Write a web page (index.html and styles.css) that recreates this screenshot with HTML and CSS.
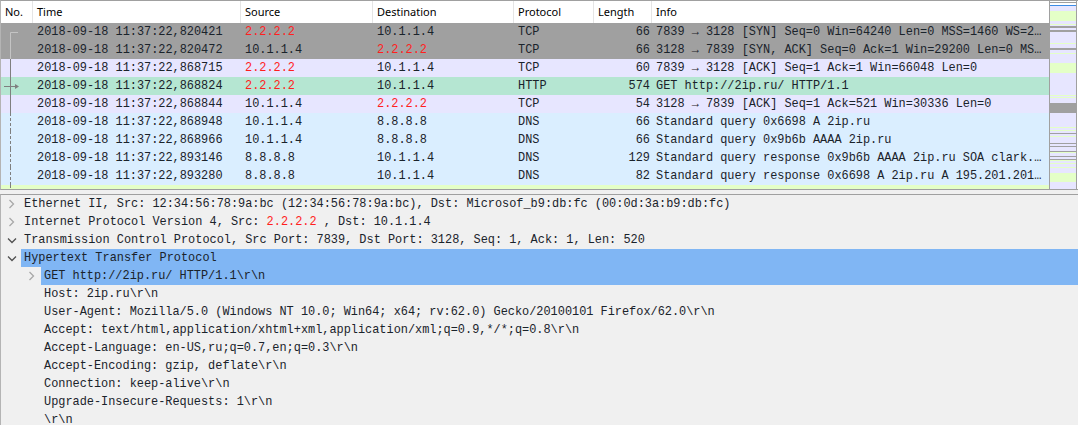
FILE: index.html
```html
<!DOCTYPE html>
<html>
<head>
<meta charset="utf-8">
<link rel="stylesheet" href="styles.css">
</head>
<body>
<div class="app">
  <div class="plist">
    <div class="table">
      <div class="hdr cols">
        <div class="hc">No.</div>
        <div class="hc">Time</div>
        <div class="hc">Source</div>
        <div class="hc">Destination</div>
        <div class="hc">Protocol</div>
        <div class="hc">Length</div>
        <div class="hc last">Info</div>
      </div>

      <div class="row cols c-gray">
        <div class="no"><svg width="32" height="18"><path class="ln" d="M9.5 9.5H17M9.5 9.5V18"/></svg></div>
        <div class="c">2018-09-18 11:37:22,820421</div>
        <div class="c red">2.2.2.2</div>
        <div class="c">10.1.1.4</div>
        <div class="c">TCP</div>
        <div class="c num">66</div>
        <div class="c info">7839 → 3128 [SYN] Seq=0 Win=64240 Len=0 MSS=1460 WS=256 SACK_PERM=1</div>
      </div>
      <div class="row cols c-gray">
        <div class="no"><svg width="32" height="18"><path class="ln" d="M9.5 0V18"/></svg></div>
        <div class="c">2018-09-18 11:37:22,820472</div>
        <div class="c">10.1.1.4</div>
        <div class="c red">2.2.2.2</div>
        <div class="c">TCP</div>
        <div class="c num">66</div>
        <div class="c info">3128 → 7839 [SYN, ACK] Seq=0 Ack=1 Win=29200 Len=0 MSS=1460 SACK_PERM=1 WS=128</div>
      </div>
      <div class="row cols c-lav">
        <div class="no"><svg width="32" height="18"><path class="ln" d="M9.5 0V18"/></svg></div>
        <div class="c">2018-09-18 11:37:22,868715</div>
        <div class="c red">2.2.2.2</div>
        <div class="c">10.1.1.4</div>
        <div class="c">TCP</div>
        <div class="c num">60</div>
        <div class="c info">7839 → 3128 [ACK] Seq=1 Ack=1 Win=66048 Len=0</div>
      </div>
      <div class="row cols c-sel">
        <div class="no"><svg width="32" height="18"><path class="ln" d="M9.5 0V18M3 9.5H15"/><polygon class="ah" points="14,7 18,9.5 14,12"/></svg></div>
        <div class="c">2018-09-18 11:37:22,868824</div>
        <div class="c red">2.2.2.2</div>
        <div class="c">10.1.1.4</div>
        <div class="c">HTTP</div>
        <div class="c num">574</div>
        <div class="c info">GET http://2ip.ru/ HTTP/1.1</div>
      </div>
      <div class="row cols c-lav">
        <div class="no"><svg width="32" height="18"><path class="ln" d="M9.5 0V18"/></svg></div>
        <div class="c">2018-09-18 11:37:22,868844</div>
        <div class="c">10.1.1.4</div>
        <div class="c red">2.2.2.2</div>
        <div class="c">TCP</div>
        <div class="c num">54</div>
        <div class="c info">3128 → 7839 [ACK] Seq=1 Ack=521 Win=30336 Len=0</div>
      </div>
      <div class="row cols c-blue">
        <div class="no"><svg width="32" height="18"><path class="ln dash" d="M9.5 0V18"/></svg></div>
        <div class="c">2018-09-18 11:37:22,868948</div>
        <div class="c">10.1.1.4</div>
        <div class="c">8.8.8.8</div>
        <div class="c">DNS</div>
        <div class="c num">66</div>
        <div class="c info">Standard query 0x6698 A 2ip.ru</div>
      </div>
      <div class="row cols c-blue">
        <div class="no"><svg width="32" height="18"><path class="ln dash" d="M9.5 0V18"/></svg></div>
        <div class="c">2018-09-18 11:37:22,868966</div>
        <div class="c">10.1.1.4</div>
        <div class="c">8.8.8.8</div>
        <div class="c">DNS</div>
        <div class="c num">66</div>
        <div class="c info">Standard query 0x9b6b AAAA 2ip.ru</div>
      </div>
      <div class="row cols c-blue">
        <div class="no"><svg width="32" height="18"><path class="ln dash" d="M9.5 0V18"/></svg></div>
        <div class="c">2018-09-18 11:37:22,893146</div>
        <div class="c">8.8.8.8</div>
        <div class="c">10.1.1.4</div>
        <div class="c">DNS</div>
        <div class="c num">129</div>
        <div class="c info">Standard query response 0x9b6b AAAA 2ip.ru SOA clark.ns.cloudflare.com</div>
      </div>
      <div class="row cols c-blue">
        <div class="no"><svg width="32" height="18"><path class="ln dash" d="M9.5 0V18"/></svg></div>
        <div class="c">2018-09-18 11:37:22,893280</div>
        <div class="c">8.8.8.8</div>
        <div class="c">10.1.1.4</div>
        <div class="c">DNS</div>
        <div class="c num">82</div>
        <div class="c info">Standard query response 0x6698 A 2ip.ru A 195.201.201.32</div>
      </div>
      <div class="row partial cols c-ygrn">
        <div class="no"><svg width="32" height="4"><path class="ln dash" d="M9.5 0V4"/></svg></div>
      </div>
    </div>
    <div class="minimap"></div>
  </div>

  <div class="splitter"></div>

  <div class="details">
    <div class="node">
      <span class="tw"><svg width="21" height="18"><polyline class="chev-c" points="8.5,5 12.5,9 8.5,13"/></svg></span>
      <span class="tx">Ethernet II, Src: 12:34:56:78:9a:bc (12:34:56:78:9a:bc), Dst: Microsof_b9:db:fc (00:0d:3a:b9:db:fc)</span>
    </div>
    <div class="node">
      <span class="tw"><svg width="21" height="18"><polyline class="chev-c" points="8.5,5 12.5,9 8.5,13"/></svg></span>
      <span class="tx">Internet Protocol Version 4, Src: <span class="red">2.2.2.2</span> , Dst: 10.1.1.4</span>
    </div>
    <div class="node">
      <span class="tw"><svg width="21" height="18"><polyline class="chev-e" points="7,7.5 11,11.5 15,7.5"/></svg></span>
      <span class="tx">Transmission Control Protocol, Src Port: 7839, Dst Port: 3128, Seq: 1, Ack: 1, Len: 520</span>
    </div>
    <div class="node">
      <span class="tw"><svg width="21" height="18"><polyline class="chev-e" points="7,7.5 11,11.5 15,7.5"/></svg></span>
      <span class="tx sel">Hypertext Transfer Protocol</span>
    </div>
    <div class="node lvl1">
      <span class="tw"><svg width="21" height="18"><polyline class="chev-c" points="8.5,5 12.5,9 8.5,13"/></svg></span>
      <span class="tx sel">GET http://2ip.ru/ HTTP/1.1\r\n</span>
    </div>
    <div class="node lvl1"><span class="tw"></span><span class="tx">Host: 2ip.ru\r\n</span></div>
    <div class="node lvl1"><span class="tw"></span><span class="tx">User-Agent: Mozilla/5.0 (Windows NT 10.0; Win64; x64; rv:62.0) Gecko/20100101 Firefox/62.0\r\n</span></div>
    <div class="node lvl1"><span class="tw"></span><span class="tx">Accept: text/html,application/xhtml+xml,application/xml;q=0.9,*/*;q=0.8\r\n</span></div>
    <div class="node lvl1"><span class="tw"></span><span class="tx">Accept-Language: en-US,ru;q=0.7,en;q=0.3\r\n</span></div>
    <div class="node lvl1"><span class="tw"></span><span class="tx">Accept-Encoding: gzip, deflate\r\n</span></div>
    <div class="node lvl1"><span class="tw"></span><span class="tx">Connection: keep-alive\r\n</span></div>
    <div class="node lvl1"><span class="tw"></span><span class="tx">Upgrade-Insecure-Requests: 1\r\n</span></div>
    <div class="node lvl1"><span class="tw"></span><span class="tx">\r\n</span></div>
  </div>
</div>
</body>
</html>
```

FILE: styles.css
```css
html, body {
  margin: 0;
  padding: 0;
  background: #f0f0f0;
}
body {
  font-family: "Liberation Mono", "DejaVu Sans Mono", monospace;
  font-size: 11.9px;
  color: #1a232b;
}
.app {
  width: 1078px;
  height: 425px;
  overflow: hidden;
  display: flex;
  flex-direction: column;
}

/* packet list */
.plist {
  display: flex;
  height: 188px;
  border-top: 1px solid #a0a0a0;
  border-bottom: 1px solid #a0a0a0;
  border-left: 1px solid #b4b4b4;
  background: #ffffff;
  flex: none;
}
.table {
  width: 1048px;
  overflow: hidden;
  display: flex;
  flex-direction: column;
}
.cols {
  display: grid;
  grid-template-columns: 32px 208px 132px 141px 80px 58px 397px;
}
.hdr {
  height: 22px;
  background: #ffffff;
  font-family: "Noto Sans", "Liberation Sans", sans-serif;
  font-size: 11px;
  color: #000;
  flex: none;
}
.hc {
  border-right: 1px solid #e5e5e5;
  padding-left: 4px;
  line-height: 22px;
  white-space: nowrap;
  overflow: hidden;
}
.hc.last { border-right: none; }

.row {
  height: 18px;
  line-height: 18px;
  flex: none;
}
.row.partial { height: 4px; }
.c {
  padding-left: 4px;
  white-space: nowrap;
  overflow: hidden;
}
.num {
  text-align: right;
  padding-left: 0;
  padding-right: 2px;
}
.info {
  text-overflow: ellipsis;
  padding-right: 2px;
}
.no svg { display: block; }
.red { color: #ff1f1f; }

.c-gray { background: #a0a0a0; }
.c-lav { background: #e7e6ff; }
.c-sel { background: #b5e6d2; }
.c-blue { background: #daeeff; }
.c-ygrn { background: #e4ffc7; }

.ln {
  fill: none;
  stroke: #7f7f7f;
  stroke-width: 1;
}
.c-gray .ln { stroke: #c4c4c4; }
.ln.dash { stroke-dasharray: 3 2; }
.ah { fill: #7f7f7f; }

/* minimap */
.minimap {
  width: 26px;
  border-left: 1px solid #a0a0a0;
  border-right: 1px solid #a0a0a0;
  background: linear-gradient(to bottom,
    #ffffff 0 1px, #a0a0a0 1px 2px, #ffffff 2px 4px, #3c8ce6 4px 5px,
    #e7e6ff 5px 10px, #e4ffc7 10px 20px, #e7e6ff 20px 23px, #e4ffc7 23px 24px,
    #e7e6ff 24px 25px, #a0a0a0 25px 27px, #e7e6ff 27px 29px, #a0a0a0 29px 31px,
    #e7e6ff 31px 42px, #e4ffc7 42px 43px, #e7e6ff 43px 47px, #a0a0a0 47px 49px,
    #e7e6ff 49px 52px, #e4ffc7 52px 53px, #e7e6ff 53px 62px, #e4ffc7 62px 72px,
    #e7e6ff 72px 94px, #e4ffc7 94px 95px, #e7e6ff 95px 96px, #e4ffc7 96px 97px,
    #e7e6ff 97px 102px, #a0a0a0 102px 112px, #e7e6ff 112px 126px,
    #e4ffc7 126px 127px, #e7e6ff 127px 129px, #e4ffc7 129px 130px, #e7e6ff 130px 132px,
    #a0a0a0 132px 133px, #e7e6ff 133px 135px, #e4ffc7 135px 136px, #e7e6ff 136px 142px,
    #a0a0a0 142px 143px, #e7e6ff 143px 145px, #a0a0a0 145px 146px, #e7e6ff 146px 150px,
    #a0a0a0 150px 151px, #e4ffc7 151px 152px, #e7e6ff 152px 155px, #a0a0a0 155px 156px,
    #e7e6ff 156px 158px, #a0a0a0 158px 159px, #e4ffc7 159px 160px, #e7e6ff 160px 162px,
    #e4ffc7 162px 163px, #e7e6ff 163px 166px, #e4ffc7 166px 167px, #e7e6ff 167px 172px,
    #e4ffc7 172px 181px, #e7e6ff 181px 188px);
}

.splitter {
  height: 4px;
  flex: none;
  background: #f0f0f0;
}

/* details */
.details {
  flex: 1;
  border-top: 1px solid #a0a0a0;
  border-left: 1px solid #b4b4b4;
  background: #f0f0f0;
  overflow: hidden;
}
.node {
  display: flex;
  height: 18px;
  line-height: 18px;
  white-space: nowrap;
}
.node.lvl1 { padding-left: 20px; }
.tw {
  width: 20px;
  flex: none;
}
.tw svg { display: block; }
.tx {
  padding-left: 3px;
  flex: 1;
}
.tx.sel { background: #80b6f4; }
.chev-c {
  fill: none;
  stroke: #a8a8a8;
  stroke-width: 1.3;
}
.chev-e {
  fill: none;
  stroke: #505050;
  stroke-width: 1.3;
}
```
